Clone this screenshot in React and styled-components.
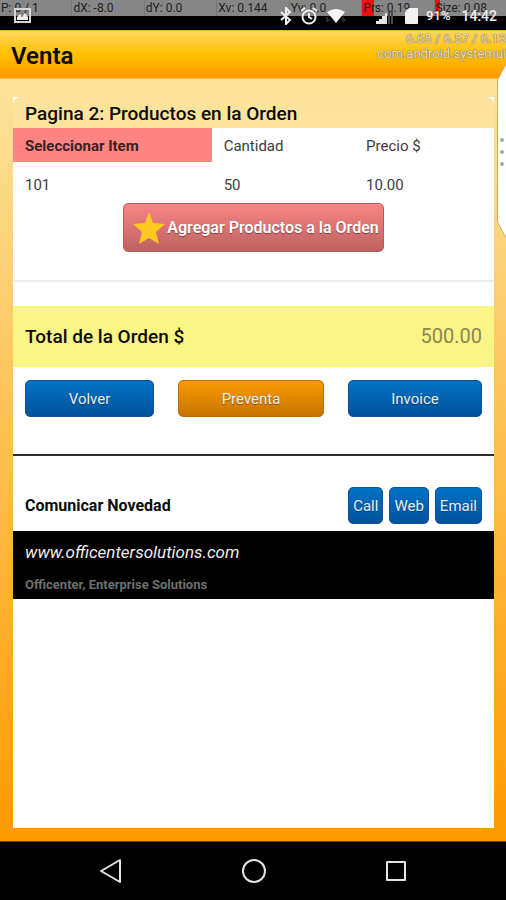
import React from "react";
import styled, { createGlobalStyle, css } from "styled-components";

const GlobalStyle = createGlobalStyle`
  *, *::before, *::after { box-sizing: border-box; }
  body { margin: 0; background: #000; }
  body, button, input { font-family: Roboto, "Liberation Sans", sans-serif; }
`;

const Screen = styled.div`
  position: relative;
  display: flex;
  flex-direction: column;
  min-height: 100vh;
  overflow: hidden;
  color: #0b0b0b;
`;

const SystemBar = styled.div`
  display: grid;
  height: 30px;
  background: #000;
  > * { grid-area: 1 / 1; min-width: 0; }
`;

const PointerStrip = styled.div`
  display: grid;
  grid-template-columns: repeat(7, 1fr);
  gap: 1px;
  height: 16px;
  background: #777;
`;

const PointerCell = styled.span`
  padding-left: 1px;
  font-size: 12px;
  line-height: 16px;
  white-space: nowrap;
  color: #222;
  background: linear-gradient(90deg, #f01010 ${(p) => p.$level}px, #868686 ${(p) => p.$level}px);
`;

const StatusIcons = styled.div`
  display: flex;
  align-items: center;
  gap: 8px;
  height: 32px;
  padding: 0 9px 0 14px;
  color: #eee;
  z-index: 1;
  svg { display: block; flex: none; }
`;

const Spacer = styled.span`
  flex: 1;
`;

const StatusText = styled.span`
  font-size: 13px;
  font-weight: 500;
  line-height: 16px;
`;

const Clock = styled.time`
  margin-left: 3px;
  font-size: 14px;
  font-weight: 500;
  line-height: 16px;
`;

const TitleBar = styled.header`
  display: flex;
  align-items: center;
  height: 49px;
  padding: 3px 11px 0;
  border-top: 1px solid #e8b83a;
  border-bottom: 1px solid #ffb733;
  background: linear-gradient(#ffd75e, #ffc000 50%, #ff9900);
`;

const Title = styled.h1`
  margin: 0;
  font-size: 24px;
  font-weight: 600;
  line-height: 28px;
`;

const DebugOverlay = styled.div`
  position: absolute;
  top: 31px;
  right: 0;
  font-size: 13px;
  line-height: 15px;
  text-align: right;
  color: #e9dcc2;
  text-shadow: 0 0 1px #8a7a55, 0 0 1px #8a7a55, 0 0 1px #8a7a55;
`;

const EdgeHandle = styled.svg`
  position: absolute;
  top: 62px;
  right: 0;
`;

const Page = styled.main`
  flex: 1;
  display: flex;
  padding: 18px 12px 13px 13px;
  background: linear-gradient(#fce39b, #ff9900);
`;

const Card = styled.section`
  flex: 1;
  min-width: 0;
  background: #fff;
`;

const CardTitle = styled.h2`
  margin: 0;
  padding: 4px 12px 0;
  height: 31px;
  font-size: 19px;
  font-weight: 500;
  line-height: 26px;
  border-radius: 8px 8px 0 0;
  background: linear-gradient(#fce39b, #fce4a0);
`;

const Items = styled.table`
  width: 100%;
  table-layout: fixed;
  border-collapse: collapse;
  font-size: 15px;
  line-height: 18px;
  color: #3c3c3c;
`;

const HeadCell = styled.th`
  width: ${(p) => p.$width};
  height: 34px;
  padding: 2px 12px 0;
  text-align: left;
  font-weight: 400;
  ${(p) => p.$selected && css`
    font-weight: 700;
    color: #3a2020;
    background: #ff8585;
  `}
`;

const Cell = styled.td`
  height: 41px;
  padding: 5px 12px 0;
`;

const AddRow = styled.div`
  display: flex;
  justify-content: center;
  padding-bottom: 28px;
  border-bottom: 2px solid #ececec;
`;

const buttonTone = {
  blue: "border-color: #14509a; background: linear-gradient(#0072c6, #00539a);",
  orange: "border-color: #b86f08; background: linear-gradient(#fb9a00, #c57402);",
  red: "border-color: #b85a5a; background: linear-gradient(#f98585, #bd6262);",
};

const Button = styled.button`
  display: flex;
  align-items: center;
  justify-content: center;
  height: 37px;
  padding: 0 4px;
  border: 1px solid;
  border-radius: 5px;
  font-size: 15px;
  line-height: 18px;
  white-space: nowrap;
  color: #e9eef4;
  text-shadow: 0 1px 1px rgba(0, 0, 0, 0.4);
  ${(p) => buttonTone[p.$tone]}
`;

const AddButton = styled(Button)`
  gap: 1px;
  height: 49px;
  font-size: 16px;
  font-weight: 600;
  color: #fff;
`;

const TotalRow = styled.div`
  display: flex;
  align-items: center;
  justify-content: space-between;
  height: 61px;
  margin-top: 24px;
  padding: 0 12px;
  background: #faf586;
`;

const TotalLabel = styled.label`
  font-size: 19px;
  font-weight: 500;
  line-height: 24px;
`;

const TotalInput = styled.input`
  width: 120px;
  padding: 0 0 2px;
  border: 0;
  outline: 0;
  background: none;
  font-size: 20px;
  line-height: 24px;
  text-align: right;
  color: #8b8750;
`;

const Actions = styled.div`
  display: grid;
  grid-template-columns: 129fr 146fr 134fr;
  gap: 24px;
  padding: 13px 12px 37px;
  border-bottom: 2px solid #2c2c2c;
`;

const ContactRow = styled.div`
  display: flex;
  align-items: center;
  gap: 6px;
  padding: 31px 12px 7px;
`;

const ContactTitle = styled.h3`
  flex: 1;
  margin: 0;
  font-size: 16px;
  font-weight: 700;
  line-height: 20px;
`;

const Footer = styled.footer`
  height: 68px;
  padding: 11px 12px 0;
  background: #000;
`;

const SiteLink = styled.a`
  display: block;
  font-size: 17px;
  font-style: italic;
  line-height: 20px;
  color: #eee;
  text-decoration: none;
`;

const Company = styled.p`
  margin: 14px 0 0;
  font-size: 13px;
  font-weight: 700;
  line-height: 18px;
  color: #6f6f6f;
`;

const NavBar = styled.nav`
  display: flex;
  justify-content: center;
  gap: 94px;
  height: 59px;
  padding: 5px 0 0 2px;
  border-top: 1px solid #7a4a00;
  background: #000;
`;

const NavButton = styled.button`
  width: 48px;
  height: 48px;
  padding: 0;
  border: 0;
  background: none;
  svg { display: block; margin: auto; }
`;

const pointerData = [
  ["P: 0 / 1", 0],
  ["dX: -8.0", 0],
  ["dY: 0.0", 0],
  ["Xv: 0.144", 0],
  ["Yv: 0.0", 0],
  ["Prs: 0.19", 12],
  ["Size: 0.08", 5],
];

const navIcon = { width: 26, height: 26, viewBox: "0 0 26 26", fill: "none", stroke: "#e4e4e4", strokeWidth: 2, strokeLinejoin: "round" };

function StatusBar() {
  return (
    <SystemBar>
      <PointerStrip>
        {pointerData.map(([text, level]) => (
          <PointerCell key={text} $level={level}>{text}</PointerCell>
        ))}
      </PointerStrip>
      <StatusIcons>
        <svg width="17" height="16" viewBox="0 0 17 16">
          <path d="M1 1h15v13H1z" fill="none" stroke="#d6d6d6" strokeWidth="2" />
          <path d="M3 12V9l3-3 2 3 3-4 3 4v3z" fill="#eee" />
        </svg>
        <Spacer />
        <svg width="12" height="18" viewBox="0 0 12 18" fill="none" stroke="#eee" strokeWidth="2">
          <path d="M1 5l9 8-4 4V1l4 4-9 8" />
        </svg>
        <svg width="18" height="18" viewBox="0 0 18 18" fill="none" stroke="#eee" strokeWidth="2">
          <circle cx="9" cy="10" r="6.5" />
          <path d="M9 6v4l3 2M1 4l4-3M17 4l-4-3" />
        </svg>
        <svg width="20" height="16" viewBox="0 0 20 16">
          <path d="M1 4Q10-2 19 4L10 15z" fill="#f4f4f4" />
          <path d="M1 9v5M3 11v2M17 9v5M19 11v2" stroke="#555" />
        </svg>
        <svg width="43" height="18" viewBox="3 0 43 18">
          <path d="M25 17v-3h3v3zM28 17v-5h3v5zM31 17V9h3v8zM34 17V6h2v11z" fill="#e6e6e6" />
          <path d="M37 4h2v13h-2zM40 4h2v13h-2z" fill="#4a4a4a" />
        </svg>
        <svg width="13" height="18" viewBox="0 0 13 18">
          <path d="M4 1h8q1 0 1 1v14q0 1-1 1H1q-1 0-1-1V5z" fill="#f2f2f2" />
        </svg>
        <StatusText>91%</StatusText>
        <Clock>14:42</Clock>
      </StatusIcons>
    </SystemBar>
  );
}

export default function App() {
  return (
    <Screen>
      <GlobalStyle />
      <StatusBar />
      <TitleBar>
        <Title>Venta</Title>
      </TitleBar>
      <Page>
        <Card>
          <CardTitle>Pagina 2: Productos en la Orden</CardTitle>
          <Items>
            <thead>
              <tr>
                <HeadCell scope="col" $width="41.3%" $selected>Seleccionar Item</HeadCell>
                <HeadCell scope="col" $width="29.6%">Cantidad</HeadCell>
                <HeadCell scope="col">Precio $</HeadCell>
              </tr>
            </thead>
            <tbody>
              <tr>
                <Cell>101</Cell>
                <Cell>50</Cell>
                <Cell>10.00</Cell>
              </tr>
            </tbody>
          </Items>
          <AddRow>
            <AddButton type="button" $tone="red">
              <svg width="38" height="36" viewBox="0 0 38 36">
                <path d="M21 2l4 11 12 1-9 8 3 12-10-6-10 6 3-12-9-8 12-1z" fill="#ffc91f" />
              </svg>
              Agregar Productos a la Orden
            </AddButton>
          </AddRow>
          <TotalRow>
            <TotalLabel htmlFor="total">Total de la Orden $</TotalLabel>
            <TotalInput id="total" readOnly value="500.00" />
          </TotalRow>
          <Actions>
            <Button type="button" $tone="blue">Volver</Button>
            <Button type="button" $tone="orange">Preventa</Button>
            <Button type="button" $tone="blue">Invoice</Button>
          </Actions>
          <ContactRow>
            <ContactTitle>Comunicar Novedad</ContactTitle>
            <Button type="button" $tone="blue">Call</Button>
            <Button type="button" $tone="blue">Web</Button>
            <Button type="button" $tone="blue">Email</Button>
          </ContactRow>
          <Footer>
            <SiteLink href="#sitio">www.officentersolutions.com</SiteLink>
            <Company>Officenter, Enterprise Solutions</Company>
          </Footer>
        </Card>
      </Page>
      <NavBar>
        <NavButton type="button" aria-label="Back">
          <svg {...navIcon}><path d="M21 2v22L2 13z" /></svg>
        </NavButton>
        <NavButton type="button" aria-label="Home">
          <svg {...navIcon}><circle cx="13" cy="13" r="11" /></svg>
        </NavButton>
        <NavButton type="button" aria-label="Recent apps">
          <svg {...navIcon}><path d="M4 4h18v18H4z" /></svg>
        </NavButton>
      </NavBar>
      <DebugOverlay>
        6.65 / 6.57 / 6.13<br />com.android.systemui
      </DebugOverlay>
      <EdgeHandle width="10" height="178" viewBox="0 0 10 178">
        <path d="M10 2L1.5 18v142L10 176z" fill="#fff" />
        <path d="M10 2L1.5 18v142L10 176" fill="none" stroke="#d3a95c" />
        <g fill="#a9a9a9">
          <circle cx="6" cy="78" r="2" />
          <circle cx="6" cy="90" r="2" />
          <circle cx="6" cy="102" r="2" />
        </g>
      </EdgeHandle>
    </Screen>
  );
}
